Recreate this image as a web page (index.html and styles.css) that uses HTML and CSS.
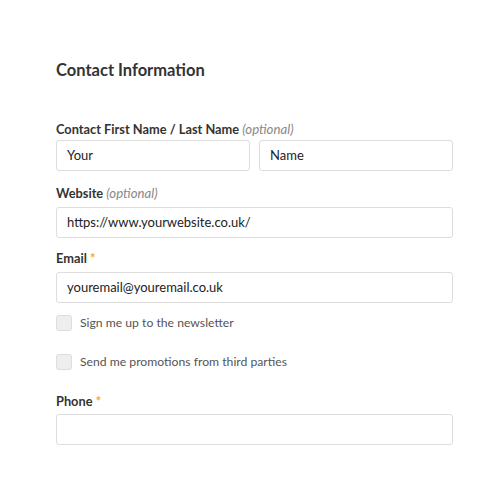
FILE: index.html
```html
<!DOCTYPE html>
<html>
<head>
<meta charset="utf-8">
<link rel="stylesheet" href="styles.css">
</head>
<body>
<form class="form">
  <h2 class="title">Contact Information</h2>
  <div class="field name">
    <label class="label">Contact First Name / Last Name <span class="opt">(optional)</span></label>
    <div class="row">
      <div class="input">Your</div>
      <div class="input">Name</div>
    </div>
  </div>
  <div class="field">
    <label class="label">Website <span class="opt">(optional)</span></label>
    <div class="input">https://www.yourwebsite.co.uk/</div>
  </div>
  <div class="field">
    <label class="label">Email <span class="req">*</span></label>
    <div class="input">youremail@youremail.co.uk</div>
  </div>
  <div class="check"><span class="box"></span><span class="check-text">Sign me up to the newsletter</span></div>
  <div class="check second"><span class="box"></span><span class="check-text">Send me promotions from third parties</span></div>
  <div class="field phone">
    <label class="label">Phone <span class="req">*</span></label>
    <div class="input"></div>
  </div>
</form>
</body>
</html>
```
FILE: styles.css
```css
html, body { margin: 0; padding: 0; background: #fff; }
body { font-family: Lato, "Open Sans", sans-serif; color: #333; }
.form { width: 397px; padding: 60px 0 0 56px; }
.title { margin: 0 0 41px; font-size: 16.5px; line-height: 20px; font-weight: 700; color: #333; }
.field { margin-bottom: 12px; }
.field.name { margin-bottom: 14px; }
.label { display: block; font-size: 12.8px; line-height: 16px; font-weight: 700; color: #333; margin-bottom: 6px; }
.field.name .label { margin-bottom: 3px; }
.opt { font-weight: 400; font-style: italic; color: #888; font-size: 13.2px; }
.req { color: #f5a623; font-weight: 700; }
.row { display: flex; gap: 9px; }
.row .input { flex: 1; }
.input { box-sizing: border-box; height: 31px; border: 1px solid #ddd; border-radius: 3px; padding: 0 10px; font-size: 13px; line-height: 29px; color: #222; background: #fff; }
.check { display: flex; align-items: center; gap: 8px; font-size: 12.2px; color: #555; }
.check.second { margin-top: 23px; }
.box { box-sizing: border-box; width: 16px; height: 16px; background: #eee; border: 1px solid #ddd; border-radius: 3px; }
.check-text { line-height: 16px; }
.phone { margin-top: 23px; margin-bottom: 0; }
.phone .label { margin-bottom: 5px; }
```
